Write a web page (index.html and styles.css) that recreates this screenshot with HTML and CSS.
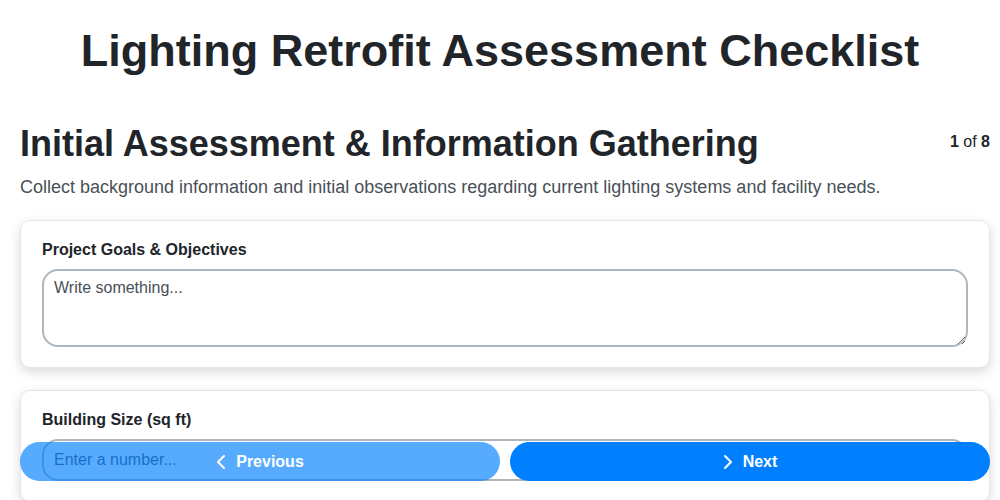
FILE: index.html
```html
<!DOCTYPE html>
<html lang="en">
<head>
    <meta charset="UTF-8">
    <meta name="viewport" content="width=device-width, initial-scale=1.0">
    <title>Lighting Retrofit Assessment Checklist</title>
    <link rel="stylesheet" href="styles.css">
</head>
<body>
    <h1 class="title">Lighting Retrofit Assessment Checklist</h1>

    <div class="page">
        <div class="step-header">
            <h2 class="step-title">Initial Assessment &amp; Information Gathering</h2>
            <div class="step-count"><b>1</b> of <b>8</b></div>
        </div>
        <p class="step-desc">Collect background information and initial observations regarding current lighting systems and facility needs.</p>

        <div class="card">
            <label class="field-label" for="goals">Project Goals &amp; Objectives</label>
            <textarea id="goals" class="field-text" placeholder="Write something..."></textarea>
        </div>

        <div class="card">
            <label class="field-label" for="size">Building Size (sq ft)</label>
            <input id="size" class="field-input" type="number" placeholder="Enter a number...">
        </div>
    </div>

    <div class="nav">
        <button class="nav-btn" disabled>
            <svg width="10" height="16" viewBox="0 0 10 16"><path d="M8 2 L2 8 L8 14" fill="none" stroke="#fff" stroke-width="2" stroke-linecap="round" stroke-linejoin="round"/></svg>
            Previous
        </button>
        <button class="nav-btn">
            <svg width="10" height="16" viewBox="0 0 10 16"><path d="M2 2 L8 8 L2 14" fill="none" stroke="#fff" stroke-width="2" stroke-linecap="round" stroke-linejoin="round"/></svg>
            Next
        </button>
    </div>
</body>
</html>
```

FILE: styles.css
```css
* {
    margin: 0;
    padding: 0;
    box-sizing: border-box;
}

body {
    font-family: 'Liberation Sans', Arial, sans-serif;
    background: #fff;
    color: #212529;
}

.title {
    font-size: 45px;
    font-weight: 700;
    text-align: center;
    line-height: 1.1;
    padding-top: 26px;
    margin-bottom: 46px;
    color: #212529;
}

.page {
    padding: 0 10px 0 20px;
}

.step-header {
    display: flex;
    justify-content: space-between;
    align-items: flex-start;
}

.step-title {
    font-size: 36px;
    font-weight: 700;
    line-height: 1.2;
}

.step-count {
    font-size: 16px;
    margin-top: 11px;
    color: #212529;
}

.step-desc {
    font-size: 18px;
    color: #495057;
    margin-top: 12px;
    margin-bottom: 22px;
}

.card {
    background: #fff;
    border: 1px solid #e6e6ea;
    border-radius: 10px;
    padding: 20px 21px;
    margin-bottom: 22px;
    box-shadow: 0 4px 12px rgba(0, 0, 0, 0.15);
}

.field-label {
    display: block;
    font-size: 16px;
    font-weight: 700;
    margin-bottom: 10px;
    color: #212529;
}

.field-text,
.field-input {
    display: block;
    width: 100%;
    font-family: inherit;
    font-size: 16px;
    color: #212529;
    border: 2px solid #adb5bd;
    border-radius: 16px;
    padding: 8px 10px;
    background: #fff;
}

.field-text {
    height: 78px;
    resize: vertical;
}

.field-input {
    height: 42px;
}

.field-text::placeholder,
.field-input::placeholder {
    color: #495057;
}

.nav {
    position: fixed;
    left: 20px;
    right: 10px;
    bottom: 19px;
    display: flex;
    gap: 10px;
}

.nav-btn {
    flex: 1;
    height: 39px;
    border: none;
    border-radius: 20px;
    background: #0080ff;
    color: #fff;
    font-family: inherit;
    font-size: 16px;
    font-weight: 700;
    display: flex;
    align-items: center;
    justify-content: center;
    gap: 10px;
    cursor: pointer;
}

.nav-btn:disabled {
    opacity: 0.66;
    cursor: default;
}
```
